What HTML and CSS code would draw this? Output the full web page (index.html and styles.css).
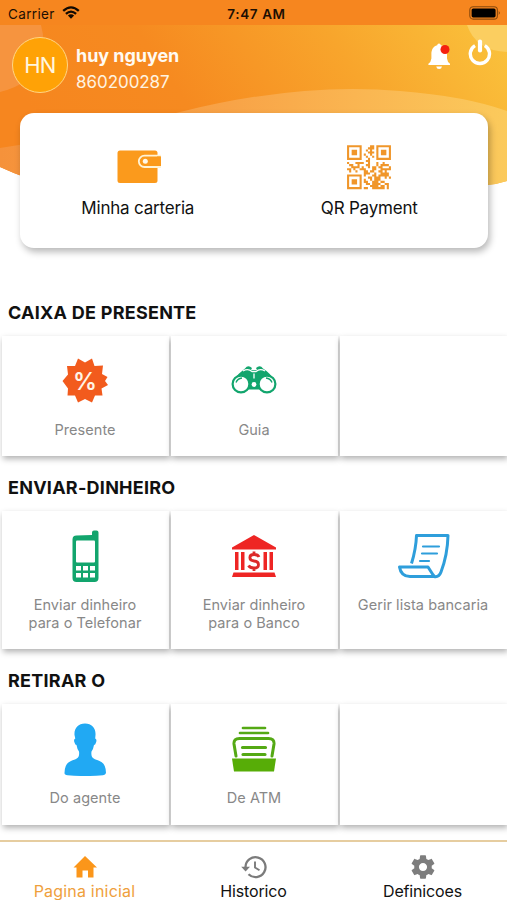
FILE: index.html
```html
<!DOCTYPE html>
<html lang="pt">
<head>
<meta charset="utf-8">
<title>Pagina inicial</title>
<link rel="stylesheet" href="styles.css">
</head>
<body>
<div class="screen">
  <svg class="backdrop" viewBox="0 0 507 190" aria-hidden="true">
    <defs>
      <linearGradient id="sky" x1="0" y1="0.35" x2="1" y2="0.1">
        <stop offset="0" stop-color="#f6861f"/>
        <stop offset=".3" stop-color="#f68a20"/>
        <stop offset=".65" stop-color="#f8a52c"/>
        <stop offset="1" stop-color="#fac43d"/>
      </linearGradient>
      <linearGradient id="hill" x1="0" y1="0" x2="1" y2="0">
        <stop offset="0" stop-color="#f5923b"/>
        <stop offset=".45" stop-color="#f8a347"/>
        <stop offset=".7" stop-color="#fab551"/>
        <stop offset="1" stop-color="#fbca5c"/>
      </linearGradient>
    </defs>
    <path fill="url(#sky)" d="M0 0H507V181Q498 184 487 185L470 188H60Q28 180 0 167Z"/>
    <path fill="#f6943f" d="M0 25H41Q46 42 40 62Q32 84 0 92Z"/>
    <path fill="url(#hill)" d="M0 148Q90 135 180 112Q300 82 400 91Q465 96 507 111V181Q498 184 487 185L470 188H60Q28 180 0 167Z"/>
    <path fill="#fbce60" d="M467 25H507V52Q476 51 467 25Z"/>
    <path fill="#f6861f" d="M0 0H507V25H0Z"/>
  </svg>

  <header class="top">
    <div class="status">
      <div class="carrier"><span>Carrier</span>
        <svg width="18" height="13" viewBox="0 0 18 13" fill="none" stroke="#120a02" stroke-width="2.3"><path d="M1.2 4.9Q9-2.2 16.8 4.9M3.9 7.9Q9 3.3 14.1 7.9"/><path fill="#120a02" stroke="none" d="M5.9 9.6Q9 7 12.1 9.6L9 12.7Z"/></svg>
      </div>
      <span class="clock">7:47 AM</span>
      <svg class="battery" width="32" height="14" viewBox="0 0 32 14"><rect x=".8" y=".7" width="27.6" height="12.4" rx="3.4" fill="none" stroke="#8b4a0c" stroke-width="1.1"/><rect x="2.6" y="2.4" width="24" height="9" rx="1.6" fill="#000"/><path d="M29.8 4.8Q31.6 6.9 29.8 9Z" fill="#5d3208"/></svg>
    </div>
    <div class="profile">
      <div class="avatar">HN</div>
      <div class="who"><strong>huy nguyen</strong><span>860200287</span></div>
      <svg class="bell" width="24" height="28" viewBox="0 0 24 28"><path fill="#fff" d="M11 1.4q1.6 0 1.8 1.8C17.600 4.500 19 8 19 12v4.500q.4 3.500 3 5.300v1.200H.4v-1.200q2.600-1.800 3-5.300V12C3.400 8 5 4.400 9.200 3.200Q9.400 1.400 11 1.400ZM8.200 24.400h5.800q-.5 2.600-2.900 2.600t-2.900-2.600Z"/><circle cx="17" cy="7.500" r="4.500" fill="#f5200f"/></svg>
      <svg class="power" width="24" height="28" viewBox="0 0 24 28" fill="none" stroke="#fff"><path stroke-width="3.400" d="M7 7.600A9.600 9.600 0 1 0 16.800 7.600"/><path stroke-width="4.200" stroke-linecap="round" d="M12 3.500V12.500"/></svg>
    </div>
  </header>

  <section class="hero">
    <div class="action wallet">
      <svg width="46" height="46" viewBox="0 0 46 46"><rect x="2.500" y="6.500" width="40" height="32.500" rx="2.500" fill="#fb9a1c"/><path fill="#fb9a1c" stroke="#fff3d6" stroke-width="1.800" d="M46.500 11.600H29.500a5.700 5.700 0 0 0 0 11.400H46.500"/><path fill="#fb9a1c" d="M42 12.500h3q1 0 1 1v7.600q0 1-1 1h-3Z"/><circle cx="30.300" cy="17.300" r="2.500" fill="#fff8e8"/></svg>
      <span>Minha carteria</span>
    </div>
    <div class="action qr">
      <svg width="46" height="46" viewBox="-.5 -.6 22 22" fill="none" stroke="#f0962a"><path d="M.5.500h6v6h-6ZM14.500.500h6v6h-6ZM.5 14.500h6v6h-6Z"/><path fill="#f0962a" stroke="none" d="M2.200 2.200h2.600v2.600H2.200ZM16.200 2.200h2.600v2.600H16.200ZM2.200 16.200h2.600v2.600H2.200Z"/><path d="M11 .5h2M10 1.500h3M9 2.500h1m1 0h1M10 3.500h3M8 4.500h1m2 0h1M9 5.500h1m2 0h1M10 6.500h1M9 7.500h2M0 8.500h1m3 0h4m2 0h1m3 0h1m2 0h1M1 9.500h2m2 0h1m3 0h2m3 0h1m1 0h4M2 10.500h4m1 0h1m2 0h1m1 0h2m1 0h2m3 0h1M0 11.500h2m1 0h1m2 0h3m3 0h2m2 0h5M1 12.500h1m2 0h1m3 0h2m1 0h2m2 0h2m1 0h1M8 13.500h3m2 0h1m2 0h4M8 14.500h1m3 0h2m1 0h5M10 15.500h2m1 0h3m2 0h1m1 0h1M8 16.500h1m2 0h1m1 0h3M8 17.500h2m2 0h3m1 0h2M9 18.500h2m1 0h4m2 0h2M11 19.500h4m1 0h2m1 0h1M8 20.500h2m2 0h6m1 0h1"/></svg>
      <span>QR Payment</span>
    </div>
  </section>

  <main class="sections">
    <section>
      <h2>CAIXA DE PRESENTE</h2>
      <div class="grid short">
        <div class="tile">
          <svg width="54" height="54" viewBox="0 0 54 54"><path fill="#f25b1d" d="M27 8.500L34 4.500L36.500 12L45 11.500L44 20L49.500 23L47 27L50 31L43.500 34.500L44.500 41.500L37 41.500L34 48.500L27 45L20 48.500L17 41.500L9.500 41.500L10 34.500L4.500 27L10 20.500L9 12L17 12L20 4.500Z"/><text class="percent" x="27" y="35.500" textLength="24" lengthAdjust="spacingAndGlyphs">%</text></svg>
          <span>Presente</span>
        </div>
        <div class="tile">
          <svg width="54" height="54" viewBox="0 -1.500 54 54"><path fill="#12a56d" d="M18 13q3-4 7-.5l-1 2h6l-1-2q4-3.500 7 .5 8 5 12 13L35 34H19L5 26q6-8 13-13Z"/><path fill="none" stroke="#fff" stroke-width="1.300" d="M16 15.500q5-3 9 .5h4q4-3.500 9-.5M27 18v5"/><circle cx="14" cy="28.500" r="8.400" fill="#fff" stroke="#12a56d" stroke-width="2.200"/><circle cx="40" cy="28.500" r="8.400" fill="#fff" stroke="#12a56d" stroke-width="2.200"/><path fill="none" stroke="#12a56d" stroke-width="1.400" d="M9 27q1.500-4 6-4.500M45 27q-1.500-4-6-4.500"/><circle cx="27" cy="29" r="2.400" fill="#fff"/></svg>
          <span>Guia</span>
        </div>
        <div class="tile"></div>
      </div>
    </section>
    <section>
      <h2>ENVIAR-DINHEIRO</h2>
      <div class="grid tall">
        <div class="tile">
          <svg width="54" height="54" viewBox="0 0 54 54"><path fill="#12a56d" d="M34 6V3.500q0-2 2-2h2.500q2 0 2 2V49q0 4-4 4h-18q-4 0-4-4V10.500q0-4 4-4Z"/><rect x="18" y="11.500" width="19" height="22" rx="1" fill="#fff"/><path fill="#fff" d="M18 37h5v4.500h-5ZM25 37h5v4.500h-5ZM32 37h5v4.500h-5ZM18 44h5v4.500h-5ZM25 44h5v4.500h-5ZM32 44h5v4.500h-5Z"/></svg>
          <span>Enviar dinheiro<br>para o Telefonar</span>
        </div>
        <div class="tile">
          <svg width="54" height="54" viewBox="0 0 54 54"><path fill="#ee2524" d="M27 6L49 18.500V20.500H5V18.500ZM8 23h3.500v18H8ZM14 23h3.500v18H14ZM36.500 23H40v18h-3.500ZM42.500 23H46v18h-3.500ZM6.500 43.500h41L49 48H5Z"/><path fill="none" stroke="#dc2a2a" stroke-width="2.800" d="M32 28Q31 25.500 27 25.500c-5.500 0-5.500 6 0 6.500 6 .5 6 7 0 7q-4 0-5.500-2.500M27 22.500v3M27 39v3"/></svg>
          <span>Enviar dinheiro<br>para o Banco</span>
        </div>
        <div class="tile">
          <svg width="54" height="54" viewBox="0 0 54 54" fill="none" stroke="#2e9edb" stroke-width="3" stroke-linejoin="round"><path d="M15.500 34.500Q20 20 20.500 6.500H52Q51.500 26 45 43q-2 5.500-7 4.500"/><path d="M3.500 38H32l4.500 7q2 2 1.500 2.500H14Q5 47.500 3.500 38Z"/><path stroke-width="2.200" stroke-linecap="round" d="M27 17.500H43M26 24.500H41M24 32H33"/></svg>
          <span>Gerir lista bancaria</span>
        </div>
      </div>
    </section>
    <section>
      <h2>RETIRAR O</h2>
      <div class="grid last">
        <div class="tile">
          <svg width="54" height="54" viewBox="0 0 54 54"><path fill="#21a9f3" d="M27 1.500c7 0 11 5 10.500 11.500l-.3 3.500q2 1 .8 4-.7 2.500-2 2.500-.6 4-2.500 6.500c-1 7.500 3 7.500 8 9.500q6.500 2.500 6.500 12-.5 2-3 2.300-18 1.500-35.500 0-3-.3-3-2.300 0-9.500 6.500-12c5-2 9-2 8-9.500q-1.900-2.500-2.500-6.500-1.300 0-2-2.500-1.200-3 .8-4L16.500 13C16 6.500 20 1.500 27 1.500Z"/></svg>
          <span>Do agente</span>
        </div>
        <div class="tile">
          <svg width="54" height="54" viewBox="0 0 54 54"><g fill="none" stroke="#54a914" stroke-linecap="round"><path stroke-width="2.700" d="M16 6H38M13 11H41"/><path stroke-width="3" d="M9 34L7 22Q6.500 16.500 12.500 16.500H41.500Q47.500 16.500 47 22L45 34"/><path stroke-width="3.200" d="M15.500 25.500H38.500M16 32.500H38"/></g><path fill="#57ad07" d="M5 36.500H49L47 49.500H7Z"/></svg>
          <span>De ATM</span>
        </div>
        <div class="tile"></div>
      </div>
    </section>
  </main>

  <nav class="tabs">
    <a class="tab active">
      <svg width="28" height="28" viewBox="0 0 28 28"><path fill="#fb961a" d="M14 3L26 14.500H22.500V24.500H17V17.500H11.500V24.500H5.500V14.500H2.500Z"/></svg>
      <span>Pagina inicial</span>
    </a>
    <a class="tab">
      <svg width="28" height="28" viewBox="0 0 28 28" fill="none" stroke="#7b7b7b" stroke-width="2.300"><path d="M5.500 15V14A10 10 0 1 1 8.500 21.300"/><path fill="#7b7b7b" stroke="none" d="M1.200 13.800H10L5.600 18.500Z"/><path stroke-width="1.900" d="M15 8.500V14.500L19.500 17.300"/></svg>
      <span>Historico</span>
    </a>
    <a class="tab">
      <svg width="28" height="28" viewBox="0 0 24 24"><path fill="#7d7d7d" d="M19.430 12.980c.04-.32.070-.64.070-.98s-.03-.66-.07-.98l2.110-1.650c.19-.15.240-.42.120-.64l-2-3.460c-.12-.22-.39-.3-.61-.22l-2.490 1c-.52-.4-1.080-.73-1.690-.98l-.38-2.650C14.460 2.180 14.250 2 14 2h-4c-.25 0-.46.180-.49.420l-.38 2.650c-.61.250-1.170.59-1.690.98l-2.490-1c-.23-.09-.49 0-.61.220l-2 3.460c-.13.220-.07.490.12.640l2.110 1.650c-.04.320-.07.650-.07.980s.03.660.07.980l-2.110 1.650c-.19.150-.24.420-.12.640l2 3.460c.12.220.39.300.61.220l2.490-1c.52.400 1.080.730 1.690.980l.38 2.650c.03.240.24.420.49.420h4c.25 0 .46-.18.490-.42l.38-2.650c.61-.25 1.170-.59 1.690-.98l2.490 1c.23.090.49 0 .61-.22l2-3.460c.12-.22.070-.49-.12-.64l-2.110-1.650zM12 15.500c-1.930 0-3.500-1.570-3.500-3.500s1.570-3.500 3.500-3.500 3.500 1.570 3.500 3.500-1.570 3.500-3.500 3.500z"/></svg>
      <span>Definicoes</span>
    </a>
  </nav>
</div>
</body>
</html>
```

FILE: styles.css
```css
* { box-sizing: border-box; }

body {
  margin: 0;
  background: #fff;
  font-family: Inter, "Liberation Sans", sans-serif;
  color: #111;
}

svg { display: block; flex: none; }

.screen {
  position: relative;
  width: 507px;
  height: 900px;
  overflow: hidden;
  display: flex;
  flex-direction: column;
}

.backdrop {
  position: absolute;
  top: 0;
  left: 0;
  width: 507px;
  height: 190px;
}

.top, .hero, .sections, .tabs { position: relative; }

.top { height: 113px; }

.status {
  display: grid;
  grid-template-columns: 1fr auto 1fr;
  align-items: center;
  height: 25px;
  padding: 2px 6px 0 8px;
  font-size: 13.5px;
  color: #1c0f03;
}

.carrier { display: flex; align-items: center; gap: 7px; letter-spacing: 0.35px; }
.carrier svg { margin-top: -2px; }
.clock { padding-left: 4px; font-weight: 600; letter-spacing: 0.6px; }
.battery { justify-self: end; margin-top: -2px; }

.profile { display: flex; align-items: flex-start; padding: 12px 15px 0 12px; }

.avatar {
  width: 56px;
  height: 56px;
  border: 1.5px solid #ffd685;
  border-radius: 50%;
  background: #ffa206;
  color: #fff6e0;
  font-size: 22px;
  letter-spacing: -0.6px;
  line-height: 54px;
  text-align: center;
}

.who {
  display: flex;
  flex-direction: column;
  flex: 1;
  margin: 6px 0 0 8px;
  color: #fff3e0;
  font-size: 17px;
  letter-spacing: -0.05px;
  line-height: 26px;
}
.who strong { font-size: 18px; color: #fffaf2; font-weight: 700; }

.bell { margin: 5px 16px 0 0; }
.power { margin-top: 1px; }

.hero {
  display: flex;
  height: 135px;
  margin: 0 19px 0 20px;
  border-radius: 14px;
  background: #fff;
  box-shadow: 2px 4px 7px rgba(0, 0, 0, 0.28);
}

.action {
  flex: 1;
  display: flex;
  flex-direction: column;
  align-items: center;
  padding-top: 31px;
  font-size: 17px;
  letter-spacing: -0.2px;
  line-height: 22px;
}
.action svg { margin-bottom: 7px; }
.wallet { padding-left: 2px; }
.qr { padding-right: 3px; }

.sections { margin-top: 33px; }

h2 {
  height: 55px;
  margin: 0;
  padding: 20px 0 0 8px;
  font-size: 18px;
  font-weight: 700;
  letter-spacing: 0.25px;
  line-height: 23px;
}

.grid {
  display: grid;
  grid-template-columns: repeat(3, 1fr);
  gap: 2px;
  padding: 0 0.5px 0 1.5px;
}
.short { height: 120px; }
.tall { height: 138px; }
.last { height: 121px; }
section:nth-child(3) h2 { height: 54.5px; }

.tile {
  display: flex;
  flex-direction: column;
  align-items: center;
  padding-top: 18px;
  background: #fff;
  box-shadow: 1px 3px 6px rgba(0, 0, 0, 0.3);
  color: #888;
  font-size: 14.5px;
  letter-spacing: 0.05px;
  line-height: 17.5px;
  text-align: center;
}
.tile svg { margin-bottom: 13px; }
.last .tile { padding-top: 18.5px; }

.percent {
  fill: #fff4e6;
  font-size: 24px;
  font-weight: 600;
  text-anchor: middle;
}

.tabs {
  display: grid;
  grid-template-columns: repeat(3, 1fr);
  height: 60px;
  margin-top: auto;
  border-top: 2px solid #e6cda0;
  background: #fff;
}

.tab {
  display: flex;
  flex-direction: column;
  align-items: center;
  padding-top: 11px;
  font-size: 16px;
  letter-spacing: -0.15px;
  line-height: 20px;
}
.tab.active { color: #efa03c; letter-spacing: 0.2px; }
```
